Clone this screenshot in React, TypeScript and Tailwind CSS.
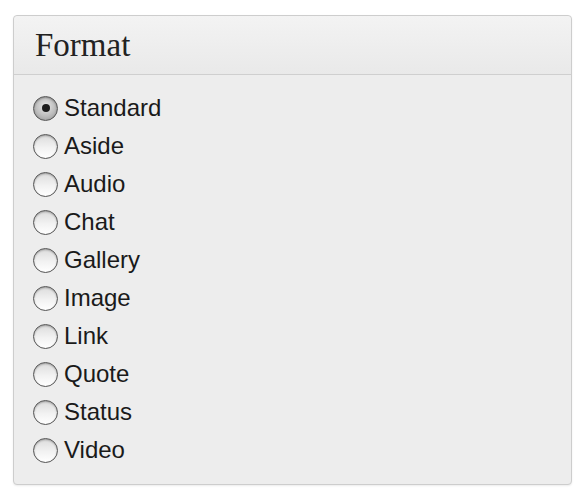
import React from "react";

const formats = ["Standard", "Aside", "Audio", "Chat", "Gallery", "Image", "Link", "Quote", "Status", "Video"];

const Radio = ({ checked }: { checked: boolean }) => (
  <span
    className={
      "relative flex h-[25px] w-[25px] shrink-0 items-center justify-center rounded-full border border-[#555] shadow-[inset_0_1px_2px_rgba(0,0,0,0.3)] " +
      (checked
        ? "bg-[radial-gradient(circle_at_50%_40%,#e8e8e8_0%,#bdbdbd_55%,#8f8f8f_100%)]"
        : "bg-[linear-gradient(to_bottom,#dcdcdc_0%,#f2f2f2_55%,#ffffff_100%)]")
    }
  >
    {checked && <span className="h-[8px] w-[8px] rounded-full bg-[#1d1d1d]" />}
  </span>
);

export default function App() {
  return (
    <div className="h-[504px] w-[588px] bg-white pl-[13px] pt-[15px]">
      <div className="w-[559px] h-[470px] rounded-[4px] border border-[#cdcdcd] bg-[#ededed] shadow-[0_1px_2px_rgba(0,0,0,0.08)]">
        <div className="h-[59px] border-b border-[#cfcfcf] bg-[linear-gradient(to_bottom,#f3f3f3,#e9e9e9)] pl-[21px] pt-[9px] rounded-t-[4px]">
          <h1 className="text-[33px] leading-[40px] text-[#222] font-['Liberation_Serif',serif]">Format</h1>
        </div>
        <ul className="pt-[14px] pl-[19px]">
          {formats.map((f, i) => (
            <li key={f} className="flex h-[38px] items-center gap-[6px]">
              <Radio checked={i === 0} />
              <span className="text-[24px] leading-none text-[#1a1a1a] font-['Liberation_Sans',Arial,sans-serif]">{f}</span>
            </li>
          ))}
        </ul>
      </div>
    </div>
  );
}
